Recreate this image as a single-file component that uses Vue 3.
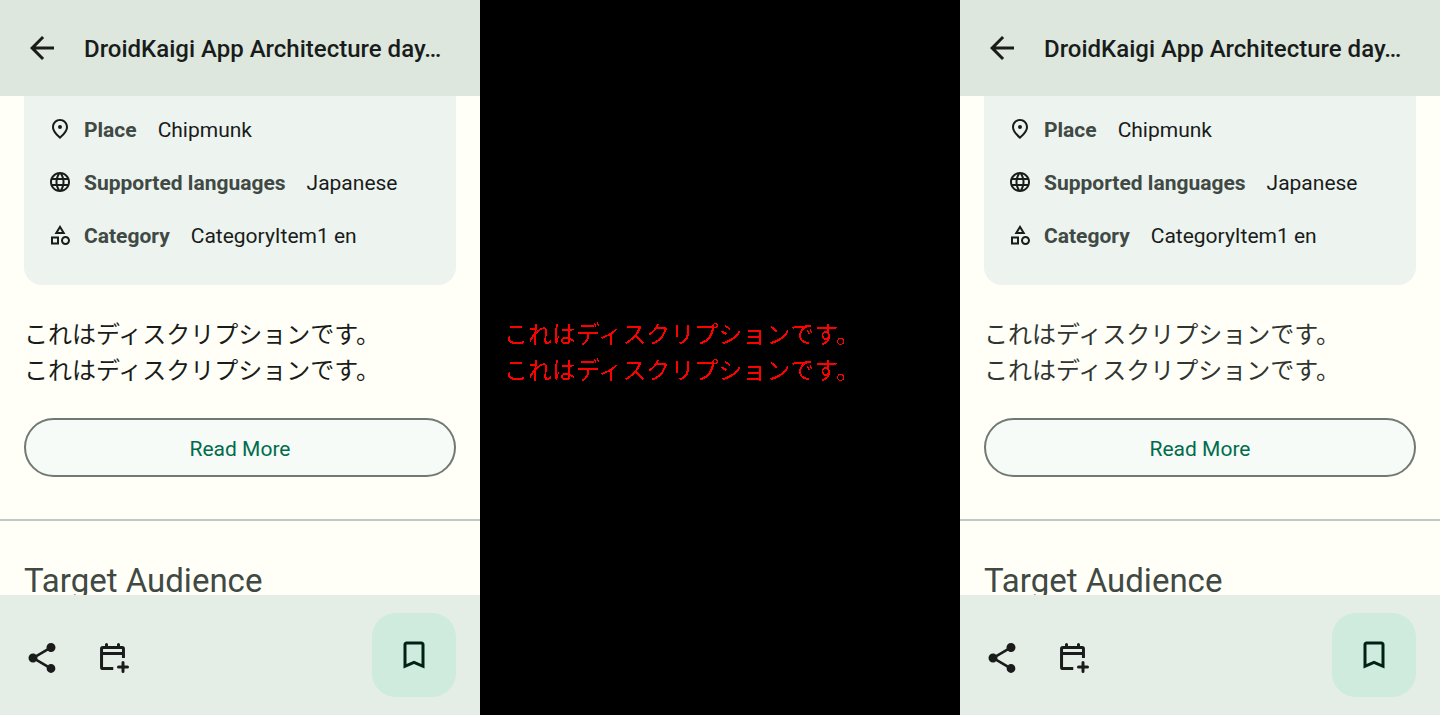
<script setup>
import { h } from 'vue'

const screens = [
  { id: 'before', tone: 'strong' },
  { id: 'diff', tone: 'diff' },
  { id: 'after', tone: 'soft' },
]

const details = [
  {
    label: 'Place',
    value: 'Chipmunk',
    icon: 'M12 2c-4.2 0-8 3.22-8 8.2 0 3.32 2.67 7.25 8 11.8 5.33-4.55 8-8.48 8-11.8C20 5.22 16.2 2 12 2zm0 17.33c-4.05-3.7-6-6.79-6-9.14C6 6.57 8.65 4 12 4s6 2.57 6 6.2c0 2.34-1.95 5.44-6 9.13zM12 8a2 2 0 1 0 0 4 2 2 0 0 0 0-4z',
  },
  {
    label: 'Supported languages',
    value: 'Japanese',
    icon: 'M11.99 2C6.47 2 2 6.48 2 12s4.47 10 9.99 10C17.52 22 22 17.52 22 12S17.52 2 11.99 2zm6.93 6h-2.95c-.32-1.25-.78-2.45-1.38-3.56 1.84.63 3.37 1.91 4.33 3.56zM12 4.04c.83 1.2 1.48 2.53 1.91 3.96h-3.82c.43-1.43 1.08-2.76 1.91-3.96zM4.26 14C4.1 13.36 4 12.69 4 12s.1-1.36.26-2h3.38c-.08.66-.14 1.32-.14 2s.06 1.34.14 2H4.26zm.82 2h2.95c.32 1.25.78 2.45 1.38 3.56-1.84-.63-3.37-1.9-4.33-3.56zm2.95-8H5.08c.96-1.66 2.49-2.93 4.33-3.56C8.81 5.55 8.35 6.75 8.03 8zM12 19.96c-.83-1.2-1.48-2.53-1.91-3.96h3.82c-.43 1.43-1.08 2.76-1.91 3.96zM14.34 14H9.66c-.09-.66-.16-1.32-.16-2s.07-1.35.16-2h4.68c.09.65.16 1.32.16 2s-.07 1.34-.16 2zm.25 5.56c.6-1.11 1.06-2.31 1.38-3.56h2.95c-.96 1.65-2.49 2.93-4.33 3.56zM16.36 14c.08-.66.14-1.32.14-2s-.06-1.34-.14-2h3.38c.16.64.26 1.31.26 2s-.1 1.36-.26 2h-3.38z',
  },
  {
    label: 'Category',
    value: 'CategoryItem1 en',
    icon: 'M12 2l-5.5 9h11L12 2zm0 3.84L13.93 9h-3.87L12 5.84zM17.5 13c-2.49 0-4.5 2.01-4.5 4.5s2.01 4.5 4.5 4.5 4.5-2.01 4.5-4.5-2.01-4.5-4.5-4.5zm0 7c-1.38 0-2.5-1.12-2.5-2.5s1.12-2.5 2.5-2.5 2.5 1.12 2.5 2.5-1.12 2.5-2.5 2.5zM3 21.5h8v-8H3v8zm2-6h4v4H5v-4z',
  },
]

const lines = ['これはディスクリプションです。', 'これはディスクリプションです。']

const Icon = (props) =>
  h('svg', { viewBox: '0 0 24 24', 'aria-hidden': 'true' }, [
    h('path', { d: props.path, fill: 'currentColor' }),
  ])
Icon.props = ['path']

const arrowPath = 'M20 11H7.83l5.59-5.59L12 4l-8 8 8 8 1.41-1.41L7.83 13H20v-2z'
const sharePath =
  'M18 16.08c-.76 0-1.44.3-1.96.77L8.91 12.7c.05-.23.09-.46.09-.7s-.04-.47-.09-.7l7.05-4.11c.54.5 1.25.81 2.04.81 1.66 0 3-1.34 3-3s-1.34-3-3-3-3 1.34-3 3c0 .24.04.47.09.7L8.04 9.81C7.5 9.31 6.79 9 6 9c-1.66 0-3 1.34-3 3s1.34 3 3 3c.79 0 1.5-.31 2.04-.81l7.12 4.16c-.05.21-.08.43-.08.65 0 1.61 1.31 2.92 2.92 2.92s2.92-1.31 2.92-2.92-1.31-2.92-2.92-2.92z'
const bookmarkPath =
  'M17 3H7c-1.1 0-2 .9-2 2v16l7-3 7 3V5c0-1.1-.9-2-2-2zm0 15l-5-2.18L7 18V5h10v13z'
</script>

<template>
  <div class="board">
    <section v-for="s in screens" :key="s.id" class="screen" :class="s.tone">
      <template v-if="s.tone !== 'diff'">
        <header class="topbar">
          <button class="icon-button" type="button" aria-label="Back">
            <Icon class="icon-large" :path="arrowPath" />
          </button>
          <h1 class="title">DroidKaigi App Architecture day…</h1>
        </header>
        <main class="content">
          <dl class="card">
            <div v-for="d in details" :key="d.label" class="detail">
              <Icon class="icon-small" :path="d.icon" />
              <dt>{{ d.label }}</dt>
              <dd>{{ d.value }}</dd>
            </div>
          </dl>
          <p class="description">
            <span v-for="(line, i) in lines" :key="i">{{ line }}</span>
          </p>
          <button class="read-more" type="button">Read More</button>
          <hr class="divider" />
          <h2 class="heading">Target Audience</h2>
        </main>
        <footer class="bottombar">
          <button class="icon-button" type="button" aria-label="Share">
            <Icon class="icon-large" :path="sharePath" />
          </button>
          <button class="icon-button" type="button" aria-label="Add to calendar">
            <svg class="icon-large" viewBox="0 0 24 24" aria-hidden="true">
              <path
                d="M11.5 19H4.6a.9.9 0 0 1-.9-.9V5.9a.9.9 0 0 1 .9-.9h12.8a.9.9 0 0 1 .9.9V12M4 9h14"
                fill="none"
                stroke="currentColor"
                stroke-width="2"
              />
              <path
                d="M7 5V3M15 5V3M18 15v6M15 18h6"
                fill="none"
                stroke="currentColor"
                stroke-width="2"
                stroke-linecap="round"
              />
            </svg>
          </button>
          <button class="fab" type="button" aria-label="Bookmark">
            <Icon class="icon-large" :path="bookmarkPath" />
          </button>
        </footer>
      </template>
      <template v-else>
        <svg class="filter-defs" aria-hidden="true">
          <filter id="hard-edge">
            <feComponentTransfer>
              <feFuncA type="discrete" tableValues="0 0 0 1 1 1" />
            </feComponentTransfer>
          </filter>
        </svg>
        <p class="description">
          <span v-for="(line, i) in lines" :key="i">{{ line }}</span>
        </p>
      </template>
    </section>
  </div>
</template>

<style>
body {
  margin: 0;
}
</style>

<style scoped>
.board {
  display: grid;
  grid-template-columns: repeat(3, minmax(0, 1fr));
  height: 100vh;
  font-family: Roboto, 'Noto Sans CJK JP', sans-serif;
  color: #191c1a;
}
.screen {
  display: flex;
  flex-direction: column;
  min-height: 0;
  background: #fffff7;
}
button {
  font: inherit;
  color: inherit;
  padding: 0;
  border: 0;
  background: none;
  cursor: pointer;
}
.icon-large,
.icon-small {
  display: block;
  flex: none;
}
.icon-large {
  width: 36px;
  height: 36px;
}
.icon-small {
  width: 24px;
  height: 24px;
  margin-right: 12px;
}
.topbar {
  display: flex;
  align-items: center;
  gap: 24px;
  flex: none;
  height: 96px;
  padding: 0 24px;
  background: #dde7de;
}
.title {
  margin: 0;
  padding-top: 2px;
  font-size: 24px;
  line-height: 36px;
  font-weight: 500;
  white-space: nowrap;
}
.content {
  flex: 1;
  min-height: 0;
  overflow: hidden;
}
.card {
  display: flex;
  flex-direction: column;
  gap: 23px;
  margin: 0 24px;
  padding: 19px 24px 34px;
  border-radius: 0 0 18px 18px;
  background: #edf3ef;
}
.detail {
  display: flex;
  align-items: flex-start;
  font-size: 21px;
  line-height: 30px;
}
.detail .icon-small {
  margin-top: 2px;
}
dt {
  font-weight: 700;
  color: #404944;
}
dd {
  margin: 0 0 0 21px;
}
.description {
  margin: 32px 24px 29px;
  font-size: 24px;
  line-height: 36px;
}
.description span {
  display: block;
}
.soft .description {
  color: #303532;
}
.read-more {
  display: block;
  width: calc(100% - 48px);
  height: 59px;
  margin: 0 24px;
  padding-top: 2px;
  border: 2px solid #707974;
  border-radius: 30px;
  background: #f6fbf8;
  color: #006c4c;
  font-size: 21px;
  line-height: 30px;
}
.divider {
  height: 2px;
  margin: 42px 0 36px;
  border: 0;
  background: #bec9c5;
}
.heading {
  margin: 0 24px;
  font-size: 33px;
  line-height: 48px;
  font-weight: 400;
  color: #404944;
}
.bottombar {
  display: flex;
  align-items: flex-start;
  gap: 36px;
  flex: none;
  height: 120px;
  box-sizing: border-box;
  padding: 18px 24px;
  background: #e5eee6;
}
.bottombar .icon-button {
  margin-top: 27px;
}
.fab {
  display: grid;
  place-items: center;
  width: 84px;
  height: 84px;
  margin-left: auto;
  border-radius: 24px;
  background: #ceebde;
  color: #002115;
}
.diff {
  background: #000;
  color: #f00;
}
.diff .description {
  margin-top: 317px;
  filter: url(#hard-edge);
}
.filter-defs {
  position: absolute;
  width: 0;
  height: 0;
}
</style>
